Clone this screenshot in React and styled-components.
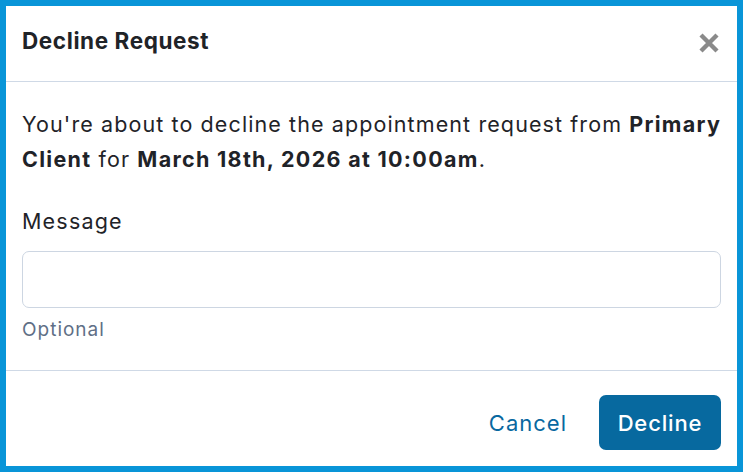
import React from 'react';
import styled, { createGlobalStyle } from 'styled-components';

const GlobalStyle = createGlobalStyle`
  html, body {
    margin: 0;
    padding: 0;
    background: #ffffff;
  }

  body {
    font-family: Inter, 'Noto Sans', sans-serif;
    color: #212529;
  }

  * {
    box-sizing: border-box;
  }
`;

const Modal = styled.div`
  width: 743px;
  height: 472px;
  border: 6px solid #0995d8;
  background: #fff;
  display: flex;
  flex-direction: column;
`;

const Header = styled.div`
  height: 76px;
  flex: 0 0 auto;
  display: flex;
  align-items: center;
  justify-content: space-between;
  padding: 0 16px 6px 16px;
  border-bottom: 1px solid #cfd9e6;
`;

const Title = styled.h2`
  margin: 0;
  font-size: 22.5px;
  font-weight: 700;
  color: #1f2328;
  letter-spacing: 0.6px;
`;

const CloseButton = styled.button`
  border: 0;
  background: none;
  padding: 0;
  width: 24px;
  height: 24px;
  display: flex;
  align-items: center;
  justify-content: center;
  cursor: pointer;
  margin-top: 4px;
`;

const Body = styled.div`
  flex: 1 1 auto;
  padding: 25px 16px 0 16px;
  border-bottom: 1px solid #cfd9e6;
`;

const Intro = styled.p`
  margin: 0 -10px 0 0;
  font-size: 21.5px;
  line-height: 35px;
  letter-spacing: 1.1px;
  color: #1f2328;
`;

const Strong = styled.strong`
  font-weight: 700;
  letter-spacing: 1.3px;
`;

const Label = styled.label`
  display: block;
  margin-top: 31px;
  font-size: 21.5px;
  line-height: 26px;
  letter-spacing: 1.2px;
  color: #1f2328;
`;

const Input = styled.input`
  display: block;
  width: 100%;
  height: 57px;
  margin-top: 17px;
  border: 1px solid #cdd6e2;
  border-radius: 7px;
  padding: 0 14px;
  font: inherit;
  font-size: 20px;
  outline: none;
`;

const Hint = styled.div`
  margin-top: 10px;
  font-size: 19px;
  line-height: 24px;
  letter-spacing: 1px;
  color: #5f6f86;
`;

const Footer = styled.div`
  height: 95px;
  flex: 0 0 auto;
  display: flex;
  align-items: center;
  justify-content: flex-end;
  gap: 32px;
  padding: 8px 16px 0 16px;
`;

const LinkButton = styled.button`
  border: 0;
  background: none;
  padding: 0;
  font-family: inherit;
  font-size: 22px;
  letter-spacing: 1px;
  color: #0868a0;
  cursor: pointer;
`;

const PrimaryButton = styled.button`
  border: 0;
  width: 122px;
  height: 55px;
  border-radius: 7px;
  background: #07699f;
  color: #fff;
  font-family: inherit;
  font-size: 22px;
  font-weight: 500;
  letter-spacing: 0.85px;
  cursor: pointer;
`;

const CloseIcon = () => (
  <svg width="20" height="20" viewBox="0 0 20 20">
    <path d="M2 2 L18 18 M18 2 L2 18" stroke="#8a8a8a" strokeWidth="4.4" strokeLinecap="butt" />
  </svg>
);

export default function App() {
  return (
    <>
      <GlobalStyle />
      <Modal>
        <Header>
          <Title>Decline Request</Title>
          <CloseButton aria-label="Close">
            <CloseIcon />
          </CloseButton>
        </Header>
        <Body>
          <Intro>
            You're about to decline the appointment request from <Strong>Primary Client</Strong> for{' '}
            <Strong>March 18th, 2026 at 10:00am</Strong>.
          </Intro>
          <Label htmlFor="message">Message</Label>
          <Input id="message" type="text" />
          <Hint>Optional</Hint>
        </Body>
        <Footer>
          <LinkButton>Cancel</LinkButton>
          <PrimaryButton>Decline</PrimaryButton>
        </Footer>
      </Modal>
    </>
  );
}
